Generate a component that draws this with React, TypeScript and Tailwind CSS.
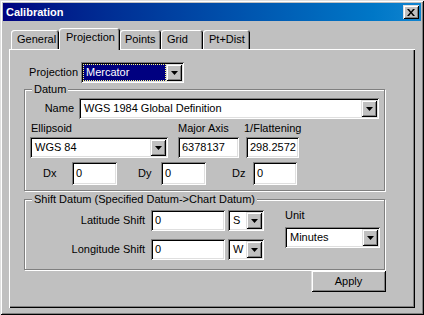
import React from 'react'

const sunken =
  'bg-white shadow-[inset_1px_1px_#808080,inset_-1px_-1px_#fff,inset_2px_2px_#000,inset_-2px_-2px_#dfdfdf]'
const raised =
  'bg-[#c0c0c0] shadow-[inset_1px_1px_#dfdfdf,inset_-1px_-1px_#000,inset_2px_2px_#fff,inset_-2px_-2px_#808080]'
const etched = 'border border-[#808080] shadow-[inset_1px_1px_#fff,1px_1px_#fff]'

function Arrow() {
  return (
    <svg width="7" height="4" viewBox="0 0 7 4">
      <path d="M0 0h7L3.5 4z" fill="#000" />
    </svg>
  )
}

function Combo({ text, className, highlight }: { text: string; className: string; highlight?: boolean }) {
  return (
    <div className={`flex items-stretch p-[2px] ${sunken} ${className}`}>
      <div className="flex-1 flex items-center overflow-hidden">
        {highlight ? (
          <div className="h-full w-full flex items-center bg-[#000080] text-white pl-[2px] border border-dotted border-[#ffff80]">
            {text}
          </div>
        ) : (
          <span className="pl-[3px] whitespace-nowrap">{text}</span>
        )}
      </div>
      <div className={`w-[16px] flex items-center justify-center ${raised}`}>
        <Arrow />
      </div>
    </div>
  )
}

function Field({ value, className }: { value: string; className: string }) {
  return (
    <div className={`flex items-center pl-[4px] ${sunken} ${className}`}>
      <span>{value}</span>
    </div>
  )
}

function Tab({ label, active, className }: { label: string; active?: boolean; className: string }) {
  if (active) {
    return (
      <div
        className={`relative z-10 h-[22px] -mb-[1px] rounded-t-[3px] bg-[#c0c0c0] shadow-[inset_1px_1px_#fff,inset_-1px_0_#000,inset_-2px_0_#808080] flex items-start pt-[3px] ${className}`}
      >
        {label}
      </div>
    )
  }
  return (
    <div
      className={`h-[19px] rounded-t-[3px] bg-[#c0c0c0] shadow-[inset_1px_1px_#fff,inset_-1px_0_#000,inset_-2px_0_#808080] flex items-start pt-[3px] ${className}`}
    >
      {label}
    </div>
  )
}

export default function App() {
  return (
    <div
      className="w-[424px] h-[315px] bg-[#c0c0c0] p-[3px] flex flex-col text-[11px] leading-[13px] text-black shadow-[inset_1px_1px_#dfdfdf,inset_-1px_-1px_#000,inset_2px_2px_#fff,inset_-2px_-2px_#808080]"
      style={{ fontFamily: '"Liberation Sans", Arial, sans-serif' }}
    >
      {/* title bar */}
      <div className="h-[18px] flex items-center justify-between pl-[3px] pr-[2px] bg-gradient-to-r from-[#000080] to-[#1084d0]">
        <span className="text-white font-bold text-[11px]">Calibration</span>
        <div className={`w-[16px] h-[14px] flex items-center justify-center ${raised}`}>
          <svg width="8" height="7" viewBox="0 0 8 7">
            <path d="M0 0h2l2 2.5L6 0h2L5 3.5 8 7H6L4 4.5 2 7H0l3-3.5z" fill="#000" />
          </svg>
        </div>
      </div>

      <div className="pt-[7px] px-[6px]">
        {/* tabs */}
        <div className="h-[21px] flex items-end pl-[2px]">
          <Tab label="General" className="w-[48px] pl-[6px]" />
          <Tab label="Projection" active className="w-[61px] pl-[7px]" />
          <Tab label="Points" className="w-[41px] pl-[5px]" />
          <Tab label="Grid" className="w-[42px] pl-[6px]" />
          <Tab label="Pt+Dist" className="w-[47px] pl-[6px]" />
        </div>

        {/* panel */}
        <div className="w-[406px] h-[259px] pt-[13px] pl-[15px] shadow-[inset_1px_1px_#fff,inset_-1px_-1px_#000,inset_-2px_-2px_#808080]">
          <div className="h-[21px] flex items-center">
            <span className="w-[57px] text-right pr-[3px] whitespace-nowrap">Projection</span>
            <Combo text="Mercator" highlight className="w-[103px] h-[21px]" />
          </div>

          {/* Datum group */}
          <div className={`relative mt-[6px] w-[361px] h-[102px] ${etched}`}>
            <span className="absolute -top-[7px] left-[7px] px-[2px] bg-[#c0c0c0]">Datum</span>
            <div className="pt-[8px] flex items-center">
              <span className="w-[49px] text-right">Name</span>
              <Combo text="WGS 1984 Global Definition" className="ml-[5px] w-[300px] h-[21px]" />
            </div>
            <div className="h-[18px] flex items-center">
              <span className="ml-[6px] w-[147px]">Ellipsoid</span>
              <span className="w-[66px]">Major Axis</span>
              <span>1/Flattening</span>
            </div>
            <div className="flex">
              <Combo text="WGS 84" className="ml-[5px] w-[138px] h-[21px]" />
              <Field value="6378137" className="ml-[10px] w-[61px] h-[21px]" />
              <Field value="298.2572" className="ml-[7px] w-[53px] h-[21px]" />
            </div>
            <div className="mt-[4px] flex items-center">
              <span className="w-[47px] pl-[18px]">Dx</span>
              <Field value="0" className="w-[45px] h-[23px]" />
              <span className="w-[44px] pl-[21px]">Dy</span>
              <Field value="0" className="w-[45px] h-[23px]" />
              <span className="w-[47px] pl-[26px]">Dz</span>
              <Field value="0" className="w-[44px] h-[23px]" />
            </div>
          </div>

          {/* Shift group */}
          <div className={`relative mt-[8px] w-[361px] h-[71px] ${etched}`}>
            <span className="absolute -top-[7px] left-[7px] px-[2px] bg-[#c0c0c0]">
              Shift Datum (Specified Datum-&gt;Chart Datum)
            </span>
            <div className="flex">
              <div className="pt-[10px] flex flex-col gap-[8px]">
                <div className="flex items-center">
                  <span className="w-[120px] text-right">Latitude Shift</span>
                  <Field value="0" className="ml-[6px] w-[74px] h-[21px]" />
                  <Combo text="S" className="ml-[3px] w-[36px] h-[21px]" />
                </div>
                <div className="flex items-center">
                  <span className="w-[120px] text-right">Longitude Shift</span>
                  <Field value="0" className="ml-[6px] w-[74px] h-[21px]" />
                  <Combo text="W" className="ml-[3px] w-[36px] h-[21px]" />
                </div>
              </div>
              <div className="ml-[21px] pt-[9px] flex flex-col">
                <span className="h-[18px]">Unit</span>
                <Combo text="Minutes" className="w-[95px] h-[21px]" />
              </div>
            </div>
          </div>

          <div className="flex justify-end w-[362px]">
            <button className={`w-[75px] h-[22px] flex items-center justify-center ${raised}`}>Apply</button>
          </div>
        </div>
      </div>
    </div>
  )
}
